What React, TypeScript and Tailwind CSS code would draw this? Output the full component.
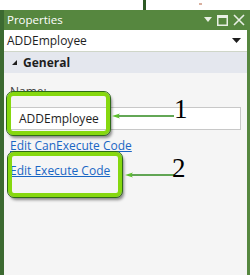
import React from 'react';

const Arrow: React.FC<{ className: string; width: number }> = ({ className, width }) => (
  <svg className={className} width={width} height="8" viewBox={`0 0 ${width} 8`}>
    <line x1="6" y1="4" x2={width} y2="4" stroke="#2f8a1e" strokeWidth="1.3" />
    <path d="M0 4 L8 1.5 L6 4 L8 6.5 Z" fill="#5cc02a" />
  </svg>
);

const App: React.FC = () => {
  return (
    <div className="w-[250px] h-[275px] bg-white flex flex-col overflow-hidden font-['Open_Sans',sans-serif] relative">
      <div className="h-[10px] relative shrink-0">
        <div className="absolute left-[143px] top-0 w-[3px] h-[10px] bg-[#2e5a26]" />
        <div className="absolute left-[199px] top-[3px] w-[3px] h-[2px] bg-[#d9b0a0]" />
      </div>
      <div className="flex-1 flex flex-col bg-[#56873f] border-l-[4px] border-l-[#3c6a31] pr-[3px]">
        <div className="h-[20px] flex items-center pl-[3px] pr-[2px] text-white">
          <span className="text-[11.5px] leading-none">Properties</span>
          <div className="ml-auto flex items-center gap-[5px]">
            <svg width="8" height="6" viewBox="0 0 8 6"><path d="M0 0 H8 L4 5 Z" fill="#e8efe4" /></svg>
            <svg width="11" height="11" viewBox="0 0 11 11"><rect x="0.75" y="0.75" width="9.5" height="9.5" fill="none" stroke="#e8efe4" strokeWidth="1.5" /><rect x="0" y="0" width="11" height="3" fill="#e8efe4" /></svg>
            <svg width="12" height="12" viewBox="0 0 12 12"><path d="M1 1 L11 11 M11 1 L1 11" stroke="#e8efe4" strokeWidth="1.6" /></svg>
          </div>
        </div>
        <div className="h-[22px] bg-white flex items-center px-[3px] border-b-[1px] border-b-[#cfd6c8]">
          <span className="text-[12px] text-[#1e1e1e] leading-none">ADDEmployee</span>
          <svg className="ml-auto mr-[3px]" width="9" height="5" viewBox="0 0 9 5"><path d="M0 0 H9 L4.5 5 Z" fill="#1e1e1e" /></svg>
        </div>
        <div className="flex-1 bg-[#f5f5f5] flex flex-col relative">
          <div className="h-[21px] bg-[#e4e7ee] flex items-center pl-[8px] gap-[6px]">
            <svg width="5" height="5" viewBox="0 0 5 5"><path d="M5 0 V5 H0 Z" fill="#1e1e1e" /></svg>
            <span className="text-[12px] font-bold text-[#1e1e1e] leading-none">General</span>
          </div>
          <div className="flex flex-col pl-[6px] pr-[6px] pt-[13px]">
            <span className="text-[12px] text-[#444] leading-none h-[13px]">Name:</span>
            <div className="mt-[8px] h-[23px] bg-white border border-[#c8c8c8] flex items-center pl-[8px]">
              <span className="text-[12px] text-[#1e1e1e] leading-none">ADDEmployee</span>
            </div>
            <a className="mt-[10px] text-[12px] text-[#1a66c4] underline leading-none">Edit CanExecute Code</a>
            <a className="mt-[13px] text-[12px] text-[#1a66c4] underline leading-none">Edit Execute Code</a>
          </div>
          <div className="absolute left-[3px] top-[40px] w-[103px] h-[43px] rounded-[6px] border-[4px] border-[#86d80f] outline outline-1 outline-[#2f6a18] shadow-[2px_3px_3px_rgba(0,0,0,0.45)]" />
          <div className="absolute left-[4px] top-[100px] w-[114px] h-[45px] rounded-[6px] border-[4px] border-[#86d80f] outline outline-1 outline-[#2f6a18] shadow-[2px_3px_3px_rgba(0,0,0,0.45)]" />
          <Arrow className="absolute left-[108px] top-[60px]" width={62} />
          <Arrow className="absolute left-[121px] top-[119px]" width={49} />
          <span className="absolute left-[170px] top-[44px] font-['Liberation_Serif',serif] text-[27px] leading-none text-black">1</span>
          <span className="absolute left-[168px] top-[103px] font-['Liberation_Serif',serif] text-[27px] leading-none text-black">2</span>
        </div>
      </div>
    </div>
  );
};

export default App;
